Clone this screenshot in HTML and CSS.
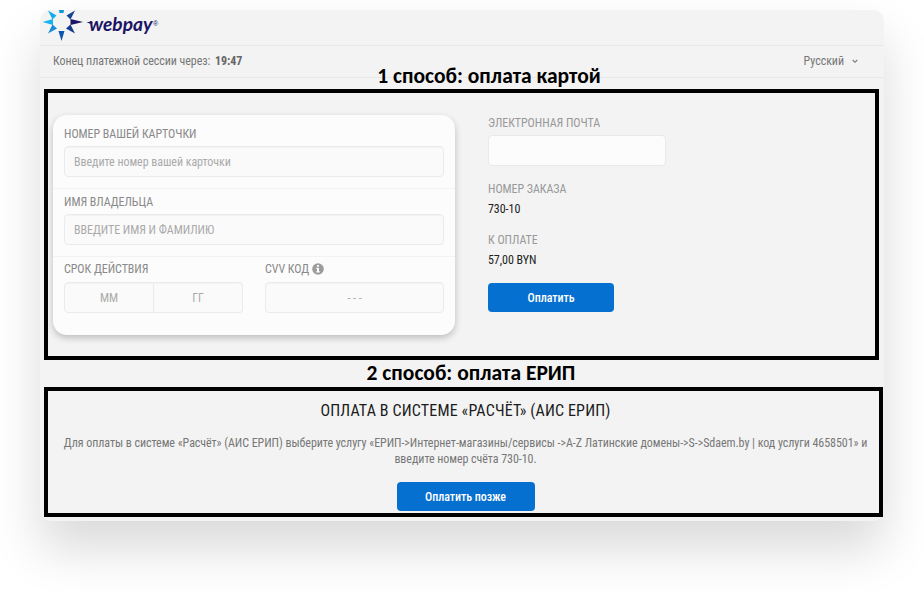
FILE: index.html
```
<!DOCTYPE html>
<html lang="ru">
<head>
<meta charset="utf-8">
<title>webpay</title>
<link rel="stylesheet" href="styles.css">
</head>
<body>
<main class="panel">
  <header class="brand">
    <svg class="logo" width="120" height="33" viewBox="0 0 120 33">
      <defs>
        <linearGradient id="ray" gradientUnits="userSpaceOnUse" x1="4" y1="10" x2="40" y2="18">
          <stop offset="0" stop-color="#13b5f0"/><stop offset=".5" stop-color="#0a63bd"/><stop offset="1" stop-color="#1b1464"/>
        </linearGradient>
      </defs>
      <g fill="url(#ray)">
        <path d="M19 0h5l-.5 3h-4z" fill="#0799da"/>
        <path d="M8 .500l8.500 5-4 4z" fill="#11aeea"/>
        <path d="M35 .500l-8.500 5 4 4z" fill="#114396"/>
        <path d="M2.500 12l10.500-3v6z" fill="#16b4ee"/>
        <path d="M43 12l-12.500-3v6z" fill="#1b1464"/>
        <path d="M8 23.500l4.500-9 4.500 4z" fill="#168dd5"/>
        <path d="M35 23.500l-4.500-9-4.500 4z" fill="#153c8c"/>
        <path d="M21.500 31l-3-10h6z" fill="#0b56ae"/>
      </g>
      <path d="M46.500 12h6v1.600h-3z" fill="#1b1464"/>
      <text class="logo-name" x="49" y="20.500" textLength="63.500" lengthAdjust="spacingAndGlyphs">webpay</text>
      <text class="logo-mark" x="113" y="16">®</text>
    </svg>
  </header>
  <div class="session">
    <p class="t timer">Конец платежной сессии через: <b>19:47</b></p>
    <div class="t language">Русский
      <svg width="6" height="5" viewBox="0 0 6 5"><path d="M.7 1l2.300 2.300L5.300 1" fill="none" stroke="#777" stroke-width="1.100"/></svg>
    </div>
  </div>
  <h1 class="method method-card">1 способ: оплата картой</h1>
  <section class="frame frame-card">
    <form class="card">
      <div class="row">
        <label class="t label">НОМЕР ВАШЕЙ КАРТОЧКИ</label>
        <div class="t field">Введите номер вашей карточки</div>
      </div>
      <div class="row">
        <label class="t label">ИМЯ ВЛАДЕЛЬЦА</label>
        <div class="t field">ВВЕДИТЕ ИМЯ И ФАМИЛИЮ</div>
      </div>
      <div class="row split">
        <div>
          <label class="t label">СРОК ДЕЙСТВИЯ</label>
          <div class="expiry"><div class="t field mid">ММ</div><div class="t field mid">ГГ</div></div>
        </div>
        <div>
          <label class="t label">CVV КОД
            <svg class="info" width="12" height="12" viewBox="0 0 12 12"><circle cx="6" cy="6" r="5.800" fill="#9c9c9c"/><path d="M5 2h2v1.800H5zM4.300 4.800H7v3.400h.8v1.300H4.300V8.200H5V6h-.7z" fill="#fcfcfc"/></svg>
          </label>
          <div class="t field mid dashes">- - -</div>
        </div>
      </div>
    </form>
    <div class="order">
      <label class="t caption">ЭЛЕКТРОННАЯ ПОЧТА</label>
      <div class="email"></div>
      <div class="t caption">НОМЕР ЗАКАЗА</div>
      <div class="t value">730-10</div>
      <div class="t caption">К ОПЛАТЕ</div>
      <div class="t value">57,00 BYN</div>
      <button class="t pay">Оплатить</button>
    </div>
  </section>
  <h1 class="method method-erip">2 способ: оплата ЕРИП</h1>
  <section class="frame frame-erip">
    <h2 class="t title">ОПЛАТА В СИСТЕМЕ «РАСЧЁТ» (АИС ЕРИП)</h2>
    <p class="t note">Для оплаты в системе «Расчёт» (АИС ЕРИП) выберите услугу «ЕРИП-&gt;Интернет-магазины/сервисы -&gt;A-Z Латинские домены-&gt;S-&gt;Sdaem.by | код услуги 4658501» и<br>введите номер счёта 730-10.</p>
    <button class="t pay later">Оплатить позже</button>
  </section>
</main>
</body>
</html>
```
FILE: styles.css
```
* { box-sizing: border-box; }
body { margin: 0; height: 592px; padding: 10px 40px; background: #fff; overflow: hidden; }
p, h1, h2 { margin: 0; }
.t { font-family: "Roboto Condensed", Roboto, "Liberation Sans", sans-serif; font-stretch: 75%; font-size: 12px; letter-spacing: -.05px; }

.panel { width: 844px; height: 511px; background: #f3f3f3; border-radius: 11px; box-shadow: 0 28px 50px rgba(0,0,0,.15); display: flex; flex-direction: column; }
.brand { height: 36px; border-bottom: 1px solid #e8e8e8; }
.logo { display: block; }
.logo-name { font: italic 700 19px Lato, sans-serif; fill: #1b1464; }
.logo-mark { font: 7px "Liberation Sans", sans-serif; fill: #1b1464; }

.session { height: 32px; padding: 0 26px 1px 13px; border-bottom: 1px solid #e8e8e8; display: flex; justify-content: space-between; align-items: center; color: #777; }
.timer b { margin-left: 2px; color: #666; }
.language { display: flex; align-items: center; gap: 8px; }

.method { font: 700 21.500px/24px Carlito, "Open Sans", sans-serif; color: #000; text-align: center; white-space: nowrap; }
.method-card { height: 24px; margin: -14px 0 1px; padding-left: 54px; line-height: 25px; }
.method-erip { height: 27px; padding-left: 18px; line-height: 27px; }

.frame { border: 4px solid #000; }
.frame-card { flex: none; width: 835px; height: 271px; margin-left: 4px; padding: 22px 0 0 5px; display: flex; align-items: flex-start; gap: 33px; }
.card { width: 402px; height: 220px; border-radius: 14px; background: #fcfcfc; box-shadow: 0 3px 7px rgba(0,0,0,.22); }
.row { height: 67.500px; padding: 0 11px; border-bottom: 1px solid #f2f2f2; }
.row:first-child { height: 74px; padding-top: 6.400px; }
.row:last-child { border: 0; }
.label { display: flex; align-items: center; gap: 3px; height: 25px; color: #8a8a8a; }
.field { height: 31px; padding: 0 9px; border: 1px solid #ebebeb; border-radius: 4px; background: #fafafa; box-shadow: inset 0 1px 1px rgba(0,0,0,.03); line-height: 31px; color: #aaa; }
.split { display: grid; grid-template-columns: 179px 179px; gap: 22px; }
.expiry { display: flex; }
.expiry .field { flex: 1; }
.expiry .field:first-child { border-radius: 4px 0 0 4px; }
.expiry .field:last-child { border-radius: 0 4px 4px 0; border-left: 0; }
.mid { text-align: center; line-height: 30px; }

.order { width: 180px; }
.caption { display: block; height: 16px; line-height: 16px; color: #999; }
.email { width: 178px; height: 31px; margin: 4px 0 15px; border: 1px solid #e9e9e9; border-radius: 4px; background: #fcfcfc; }
.value { height: 16px; margin: 4px 0 15px; line-height: 16px; color: #222; }
.pay { display: block; width: 126px; height: 29px; padding: 0; border: 0; border-radius: 4px; background: #0670d0; color: #fff; font-weight: 500; }

.frame-erip { flex: none; width: 839px; height: 130px; margin-left: 4px; padding-left: 4px; display: flex; flex-direction: column; align-items: center; }
.title { margin-top: 9px; font-size: 16px; line-height: 22px; font-weight: 400; color: #1c1c1c; letter-spacing: .15px; }
.note { margin-top: 13px; line-height: 16px; text-align: center; white-space: nowrap; color: #777; }
.later { width: 138px; margin-top: 15px; }
```
